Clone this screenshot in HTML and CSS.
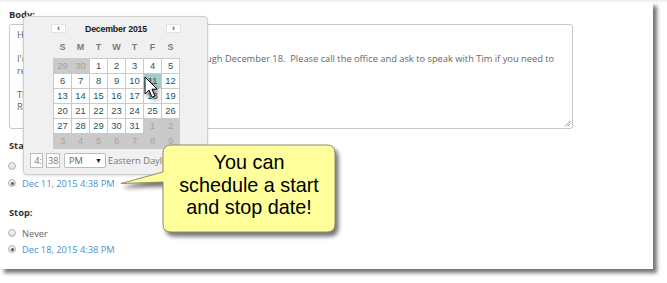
FILE: index.html
```html
<!DOCTYPE html>
<html>
<head>
<meta charset="utf-8">
<link rel="stylesheet" href="styles.css">
</head>
<body>
<div class="topband"></div>
<div class="panel">
  <div class="label">Body:</div>
  <div class="textarea">Hello,<br><br>I&#39;m out of the office from December 11 through December 18.&nbsp; Please call the office and ask to speak with Tim if you need to<br>reach someone.<br><br>Thanks,<br>Robert<svg class="grip" width="7" height="7" viewBox="0 0 7 7"><path d="M1 6.5L6.5 1M3.5 6.5L6.5 3.5" stroke="#777" stroke-width="0.8"/></svg></div>

  <div class="label start-label">Start:</div>
  <div class="radio-row first"><span class="radio"></span></div>
  <div class="radio-row second"><span class="radio checked"></span><span class="date">Dec 11, 2015 4:38 PM</span></div>

  <div class="label stop-label">Stop:</div>
  <div class="radio-row third"><span class="radio"></span><span class="opt">Never</span></div>
  <div class="radio-row fourth"><span class="radio checked"></span><span class="date">Dec 18, 2015 4:38 PM</span></div>

  <div class="datepicker">
    <div class="dp-head">
      <span class="dp-btn">&#8249;</span>
      <span class="dp-title">December 2015</span>
      <span class="dp-btn">&#8250;</span>
    </div>
    <div class="dp-dow">
      <span>S</span><span>M</span><span>T</span><span>W</span><span>T</span><span>F</span><span>S</span>
    </div>
    <div class="dp-grid">
      <span class="o">29</span><span class="o">30</span><span>1</span><span>2</span><span>3</span><span>4</span><span>5</span>
      <span>6</span><span>7</span><span>8</span><span>9</span><span>10</span><span class="sel">11</span><span>12</span>
      <span>13</span><span>14</span><span>15</span><span>16</span><span>17</span><span>18</span><span>19</span>
      <span>20</span><span>21</span><span>22</span><span>23</span><span>24</span><span>25</span><span>26</span>
      <span>27</span><span>28</span><span>29</span><span>30</span><span>31</span><span class="o">1</span><span class="o">2</span>
      <span class="o">3</span><span class="o">4</span><span class="o">5</span><span class="o">6</span><span class="o">7</span><span class="o">8</span><span class="o">9</span>
    </div>
    <div class="dp-time">
      <span class="tbox hh">4:</span>
      <span class="tbox mm">38</span>
      <span class="tsel"><span>PM</span><span class="arrow">&#9660;</span></span>
      <span class="tz">Eastern Daylight Time</span>
    </div>
  </div>

  <svg class="cursor" width="16" height="24" viewBox="-1 -1 16 24"><path d="M0 0V17L4 13.2L7 20.2L10 19L7 12.2H12.2Z" fill="#fff" stroke="#000" stroke-width="1" stroke-linejoin="round"/></svg>

  <svg class="callout-shape" width="235" height="108" viewBox="0 0 235 108"><path d="M56 5H212Q220 5 220 13V84Q220 92 212 92H56Q48 92 48 84V42L6 43.5L48 32V13Q48 5 56 5Z" fill="#ffff9c" stroke="#8c8c70" stroke-width="1"/></svg>
  <div class="callout-text">You can<br>schedule a start<br>and stop date!</div>
</div>
</body>
</html>
```

FILE: styles.css
```css
html, body {
  margin: 0;
  padding: 0;
  background: #fff;
}
body {
  width: 667px;
  height: 283px;
  overflow: hidden;
  font-family: "Open Sans", "Liberation Sans", sans-serif;
}
.topband {
  height: 2px;
  background: #f2f2f2;
}
.panel {
  position: relative;
  width: 653px;
  height: 267px;
  box-sizing: border-box;
  padding: 7px 0 0 9px;
  background: #fff;
  box-shadow: 4px 4px 4px rgba(0, 0, 0, 0.55);
}
.label {
  font-size: 9.3px;
  line-height: 12px;
  font-weight: bold;
  color: #333;
}
.textarea {
  position: relative;
  margin-top: 3px;
  width: 564px;
  height: 105px;
  box-sizing: border-box;
  border: 1px solid #c8c8c8;
  border-radius: 3px;
  padding: 4px 7px;
  font-size: 9.3px;
  line-height: 12px;
  color: #666;
  white-space: nowrap;
}
.grip {
  position: absolute;
  right: 1px;
  bottom: 1px;
}
.start-label { margin-top: 11px; }
.stop-label { margin-top: 18px; }
.radio-row {
  display: flex;
  align-items: center;
  height: 12px;
  font-size: 9.3px;
}
.radio-row.first { margin-top: 8px; }
.radio-row.second { margin-top: 5px; }
.radio-row.third { margin-top: 8px; }
.radio-row.fourth { margin-top: 4px; }
.radio {
  width: 8px;
  height: 8px;
  box-sizing: border-box;
  border: 1px solid #b4b4b4;
  border-radius: 50%;
  background: linear-gradient(#f4f4f4, #dcdcdc);
  margin: 0 6px 0 -1px;
  display: flex;
  align-items: center;
  justify-content: center;
}
.radio.checked::after {
  content: "";
  width: 3px;
  height: 3px;
  border-radius: 50%;
  background: #555;
}
.opt { color: #666; }
.date { color: #4b8fd1; }

.datepicker {
  position: absolute;
  left: 23px;
  top: 14px;
  width: 185px;
  height: 159px;
  box-sizing: border-box;
  border: 1px solid #cfcfcf;
  border-radius: 4px;
  background: #f0f0f0;
  box-shadow: 0 1px 3px rgba(0, 0, 0, 0.12);
  padding-top: 7px;
  overflow: hidden;
  font-family: "Liberation Sans", Arial, sans-serif;
}
.dp-head {
  margin-left: 27px;
  width: 130px;
  height: 9px;
  display: flex;
  justify-content: space-between;
  align-items: center;
}
.dp-btn {
  width: 15px;
  height: 9px;
  box-sizing: border-box;
  background: #fff;
  border: 1px solid #e2e2e2;
  font-size: 9px;
  line-height: 6px;
  font-weight: bold;
  color: #555;
  text-align: center;
}
.dp-title {
  font-size: 8.8px;
  font-weight: bold;
  color: #1a1a1a;
  letter-spacing: -0.2px;
}
.dp-dow {
  margin: 8px 0 0 29px;
  padding: 0 1px;
  display: grid;
  grid-template-columns: repeat(7, 17px);
  column-gap: 1px;
  height: 12px;
  line-height: 12px;
  font-size: 9px;
  font-weight: bold;
  color: #7a7a7a;
  text-align: center;
}
.dp-grid {
  margin: 5px 0 0 29px;
  width: 127px;
  box-sizing: border-box;
  padding: 1px;
  background: #cacaca;
  display: grid;
  grid-template-columns: repeat(7, 17px);
  grid-auto-rows: 14px;
  gap: 1px;
  font-size: 9.4px;
  line-height: 14px;
  text-align: center;
  color: #24535f;
}
.dp-grid span { background: #fff; }
.dp-grid span.o { background: transparent; color: #a3a3a3; }
.dp-grid span.sel { background: #a4caca; }
.dp-time {
  margin: 4px 0 0 6px;
  display: flex;
  align-items: center;
  height: 15px;
  font-family: "Open Sans", "Liberation Sans", sans-serif;
  font-size: 9.3px;
  white-space: nowrap;
}
.tbox {
  height: 15px;
  box-sizing: border-box;
  background: #fff;
  border: 1px solid #bcbcbc;
  color: #777;
  line-height: 13px;
  overflow: hidden;
}
.tbox.hh { width: 13px; text-align: right; }
.tbox.mm { width: 14px; margin-left: 3px; padding-left: 1px; }
.tsel {
  margin-left: 4px;
  width: 42px;
  height: 15px;
  box-sizing: border-box;
  background: #fff;
  border: 1px solid #bcbcbc;
  border-radius: 2px;
  color: #666;
  display: flex;
  align-items: center;
  justify-content: space-between;
  padding: 0 3px 0 4px;
}
.tsel .arrow { font-size: 7px; color: #111; }
.tz { margin-left: 2px; color: #777; }

.cursor {
  position: absolute;
  left: 144px;
  top: 74px;
  filter: drop-shadow(2px 3px 2px rgba(0, 0, 0, 0.45));
}
.callout-shape {
  position: absolute;
  left: 115px;
  top: 138px;
  filter: drop-shadow(3px 4px 2px rgba(0, 0, 0, 0.55));
}
.callout-text {
  position: absolute;
  left: 163px;
  top: 149px;
  width: 172px;
  text-align: center;
  font-family: "Liberation Sans", Arial, sans-serif;
  font-size: 19.8px;
  line-height: 22.5px;
  color: #000;
}
```
